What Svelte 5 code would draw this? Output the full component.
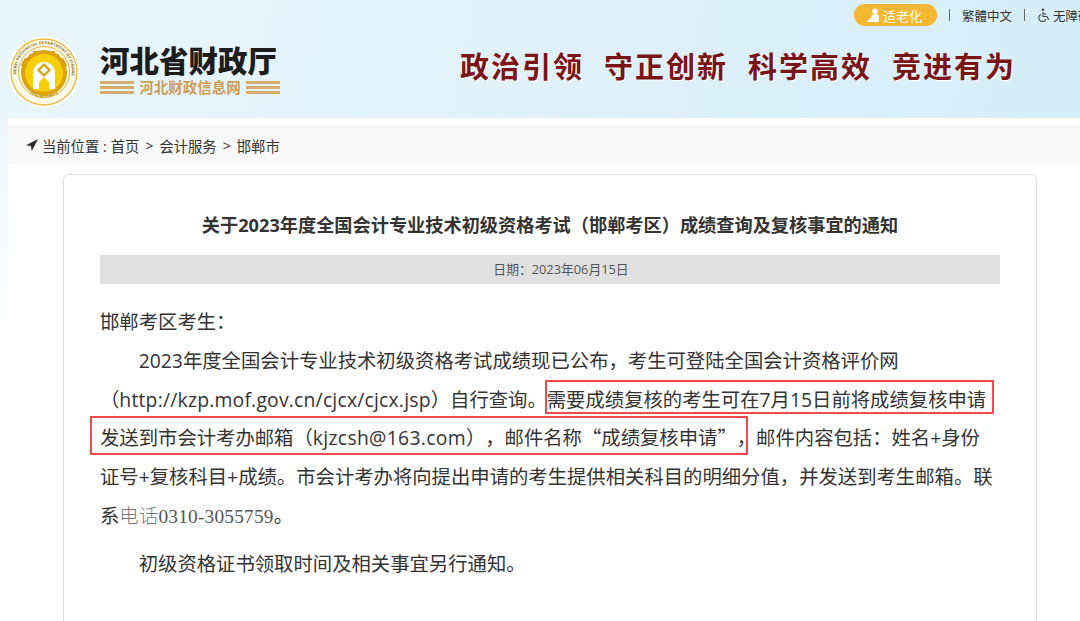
<script>
	const crumbs = ['首页', '会计服务', '邯郸市'];
</script>

<div class="page">
	<header class="head">
		<div class="topbar">
			<span class="pill">
				<svg width="15" height="15" viewBox="0 0 15 15" aria-hidden="true">
					<circle cx="9" cy="3.200" r="2.800" fill="#fff" />
					<path d="M5.500 7.500c1-1.600 6-1.600 7.500 0V14H1.500c0-2.200 1.800-3.400 4-4z" fill="#fff" />
				</svg>
				适老化
			</span>
			<i class="sep"></i>
			<span>繁體中文</span>
			<i class="sep"></i>
			<svg class="wheel" width="14" height="14" viewBox="0 0 14 14" aria-hidden="true">
				<circle cx="6" cy="1.800" r="1.300" fill="#444" />
				<path d="M6 4v4.500h4l1.800 3.500M6 6h3.500M4 6.500a3.700 3.700 0 1 0 5 4.500" fill="none" stroke="#444" stroke-width="1.100" />
			</svg>
			<span>无障碍</span>
		</div>
		<div class="brand">
			<svg class="logo" width="72" height="72" viewBox="0 0 72 72" aria-hidden="true">
				<defs>
					<path id="ring-top" d="M8.500 40a27.800 27.800 0 1 1 55 0" />
					<path id="ring-bottom" d="M17 53a26 26 0 0 0 38 0" />
				</defs>
				<circle cx="36" cy="36" r="36" fill="#fff" />
				<circle cx="36" cy="36" r="33" fill="#fdf9ea" stroke="#e9bd45" stroke-width="1.400" />
				<circle cx="36" cy="36" r="25.500" fill="none" stroke="#e0b23c" stroke-width="1" />
				<text class="ring-text" fill="#8d7a3c"><textPath href="#ring-top" startOffset="2%">HEBEI PROVINCIAL DEPARTMENT OF FINANCE</textPath></text>
				<text class="ring-text cn" fill="#b8901f"><textPath href="#ring-bottom" startOffset="14%">河北省财政厅</textPath></text>
				<path d="M13 30a23 23 0 0 1 4-8h4v-4h4v-3h4v3h3v-3h8v3h3v-3h4v3h4v4h4a23 23 0 0 1 4 8z" fill="#cfa02a" />
				<circle cx="36" cy="37" r="23" fill="#dca40c" />
				<circle cx="36" cy="37" r="19" fill="#f7cf06" />
				<path d="M25 53V37a11 11 0 0 1 22 0v16h-6v-7l-5-5-5 5v7z" fill="#fff" />
				<path d="M36 28.500l5.500 5.500-5.500 5.500-5.500-5.500z" fill="none" stroke="#d9a20a" stroke-width="2.200" />
			</svg>
			<div class="site">
				<div class="site-name">河北省财政厅</div>
				<div class="site-sub">
					<i class="rules"></i>
					<span>河北财政信息网</span>
					<i class="rules"></i>
				</div>
			</div>
			<div class="slogan">
				<span>政治引领</span>
				<span>守正创新</span>
				<span>科学高效</span>
				<span>竞进有为</span>
			</div>
		</div>
	</header>

	<nav class="crumb">
		<svg width="12" height="12" viewBox="0 0 12 12" aria-hidden="true">
			<path d="M12 0L0 6.200l4.800.8 1 5z" fill="#2b2b2b" />
		</svg>
		<span>当前位置 :</span>
		{#each crumbs as item, i}
			{#if i > 0}<span class="gt">&gt;</span>{/if}
			<span>{item}</span>
		{/each}
	</nav>

	<main class="card">
		<h1>关于2023年度全国会计专业技术初级资格考试（邯郸考区）成绩查询及复核事宜的通知</h1>
		<div class="date">日期：2023年06月15日</div>
		<div class="body">
			<p>邯郸考区考生：</p>
			<p class="indent">
				2023年度全国会计专业技术初级资格考试成绩现已公布，考生可登陆全国会计资格评价网（<span class="url">http://kzp.mof.gov.cn/cjcx/cjcx.jsp</span>）自行查询。需要成绩复核的考生可在7月15日前将成绩复核申请发送到市会计考办邮箱（<span class="mail">kjzcsh@163.com</span>），邮件名称<span class="cjk">“</span>成绩复核申请<span class="cjk">”</span>，邮件内容包括：姓名+身份<br />证号+复核科目+成绩。市会计考办将向提出申请的考生提供相关科目的明细分值，并发送到考生邮箱。联<br />系<span class="tel"><span class="tel-cn">电话</span>0310-3055759</span>。
			</p>
			<p class="indent last">初级资格证书领取时间及相关事宜另行通知。</p>
		</div>
		<div class="box box-a"></div>
		<div class="box box-b"></div>
	</main>
</div>

<style>
	:global(body) {
		background: #fff;
	}

	.page {
		height: 621px;
		overflow: hidden;
		color: #333;
		font-family: "Open Sans", "Noto Sans CJK SC", sans-serif;
		background: linear-gradient(to bottom, #e6f3fb 0, #eef7fc 130px, #f6fbfe 240px, #fff 330px) left top / 8px 100% no-repeat;
	}

	.head {
		height: 118px;
		background: linear-gradient(100deg, #e9f6fc 0%, #e0f1fa 50%, #d6eef9 100%);
	}

	.topbar {
		display: flex;
		align-items: center;
		height: 30px;
		padding-left: 854px;
		font-size: 12.500px;
		white-space: nowrap;
		overflow: hidden;
	}

	.pill {
		display: flex;
		align-items: center;
		justify-content: center;
		gap: 2px;
		flex: none;
		width: 83px;
		height: 22px;
		padding-right: 3px;
		box-sizing: border-box;
		border-radius: 11px;
		background: #f5b731;
		color: #fff;
		font-size: 13px;
	}

	.sep {
		flex: none;
		width: 1px;
		height: 12px;
		margin: 0 12px;
		background: #666;
	}

	.wheel {
		flex: none;
		margin-right: 2px;
	}

	.brand {
		display: flex;
		align-items: center;
		height: 72px;
		margin-top: 6px;
		padding-left: 8px;
	}

	.logo {
		flex: none;
	}

	.ring-text {
		font-size: 4px;
		font-weight: 700;
		letter-spacing: 0.15px;
	}

	.cn {
		font-size: 5px;
	}

	.site {
		width: 180px;
		margin: -4px 0 0 20px;
	}

	.site-name {
		font-size: 29.500px;
		line-height: 32px;
		font-weight: 900;
		color: #1d1d1d;
		white-space: nowrap;
	}

	.site-sub {
		display: flex;
		align-items: center;
		gap: 5px;
		margin-top: 3px;
		color: #cd9f55;
		font-size: 14.500px;
		font-weight: 700;
		line-height: 16px;
		white-space: nowrap;
	}

	.rules {
		flex: 1;
		height: 14px;
		background: repeating-linear-gradient(to bottom, #d6ac6c 0 3px, transparent 3px 5px);
	}

	.slogan {
		display: flex;
		gap: 20px;
		margin: 0 0 14px 180px;
		font-size: 29px;
		letter-spacing: 2px;
		font-weight: 700;
		color: #7b1416;
		text-shadow: 1px 1px 0 #fff;
		white-space: nowrap;
	}

	.crumb {
		display: flex;
		align-items: center;
		gap: 4px;
		height: 38px;
		margin: 8px 0 10px 8px;
		padding-left: 18px;
		background: #f8f8f8;
		font-size: 14.300px;
	}

	.gt {
		margin: 0 2px;
	}

	.card {
		position: relative;
		box-sizing: border-box;
		width: 974px;
		height: 600px;
		margin-left: 63px;
		padding: 0 36px;
		border: 1px solid #ddd;
		border-radius: 6px;
	}

	h1 {
		margin: 38px 0 0;
		font-size: 18.200px;
		line-height: 24px;
		font-weight: 700;
		text-align: center;
		color: #333;
	}

	.date {
		height: 29px;
		margin-top: 18px;
		padding-left: 22px;
		background: #e0e0e0;
		font-size: 12.800px;
		line-height: 29px;
		text-align: center;
		color: #555;
	}

	.body {
		margin-top: 19px;
		font-size: 19.350px;
		line-height: 38.800px;
		color: #333;
		text-spacing-trim: space-all;
	}

	.body p {
		margin: 0;
	}

	.indent {
		text-indent: 38.700px;
	}

	.last {
		margin-top: 9px !important;
	}

	.url {
		letter-spacing: 0.2px;
	}

	.mail {
		letter-spacing: 0.3px;
	}

	.cjk {
		font-family: "Noto Sans CJK SC", sans-serif;
		line-height: 1;
	}

	.tel {
		font-family: "Liberation Serif", "Noto Sans CJK SC", serif;
		line-height: 1;
		color: #555;
		letter-spacing: 0.2px;
	}

	.tel-cn {
		font-family: "Noto Sans CJK SC", sans-serif;
		font-weight: 300;
		color: #777;
	}

	.box {
		position: absolute;
		box-sizing: border-box;
		border: 2px solid #f24a4a;
		pointer-events: none;
	}

	.box-a {
		left: 481px;
		top: 205px;
		width: 449px;
		height: 34px;
	}

	.box-b {
		left: 26px;
		top: 241px;
		width: 658px;
		height: 39px;
	}
</style>
